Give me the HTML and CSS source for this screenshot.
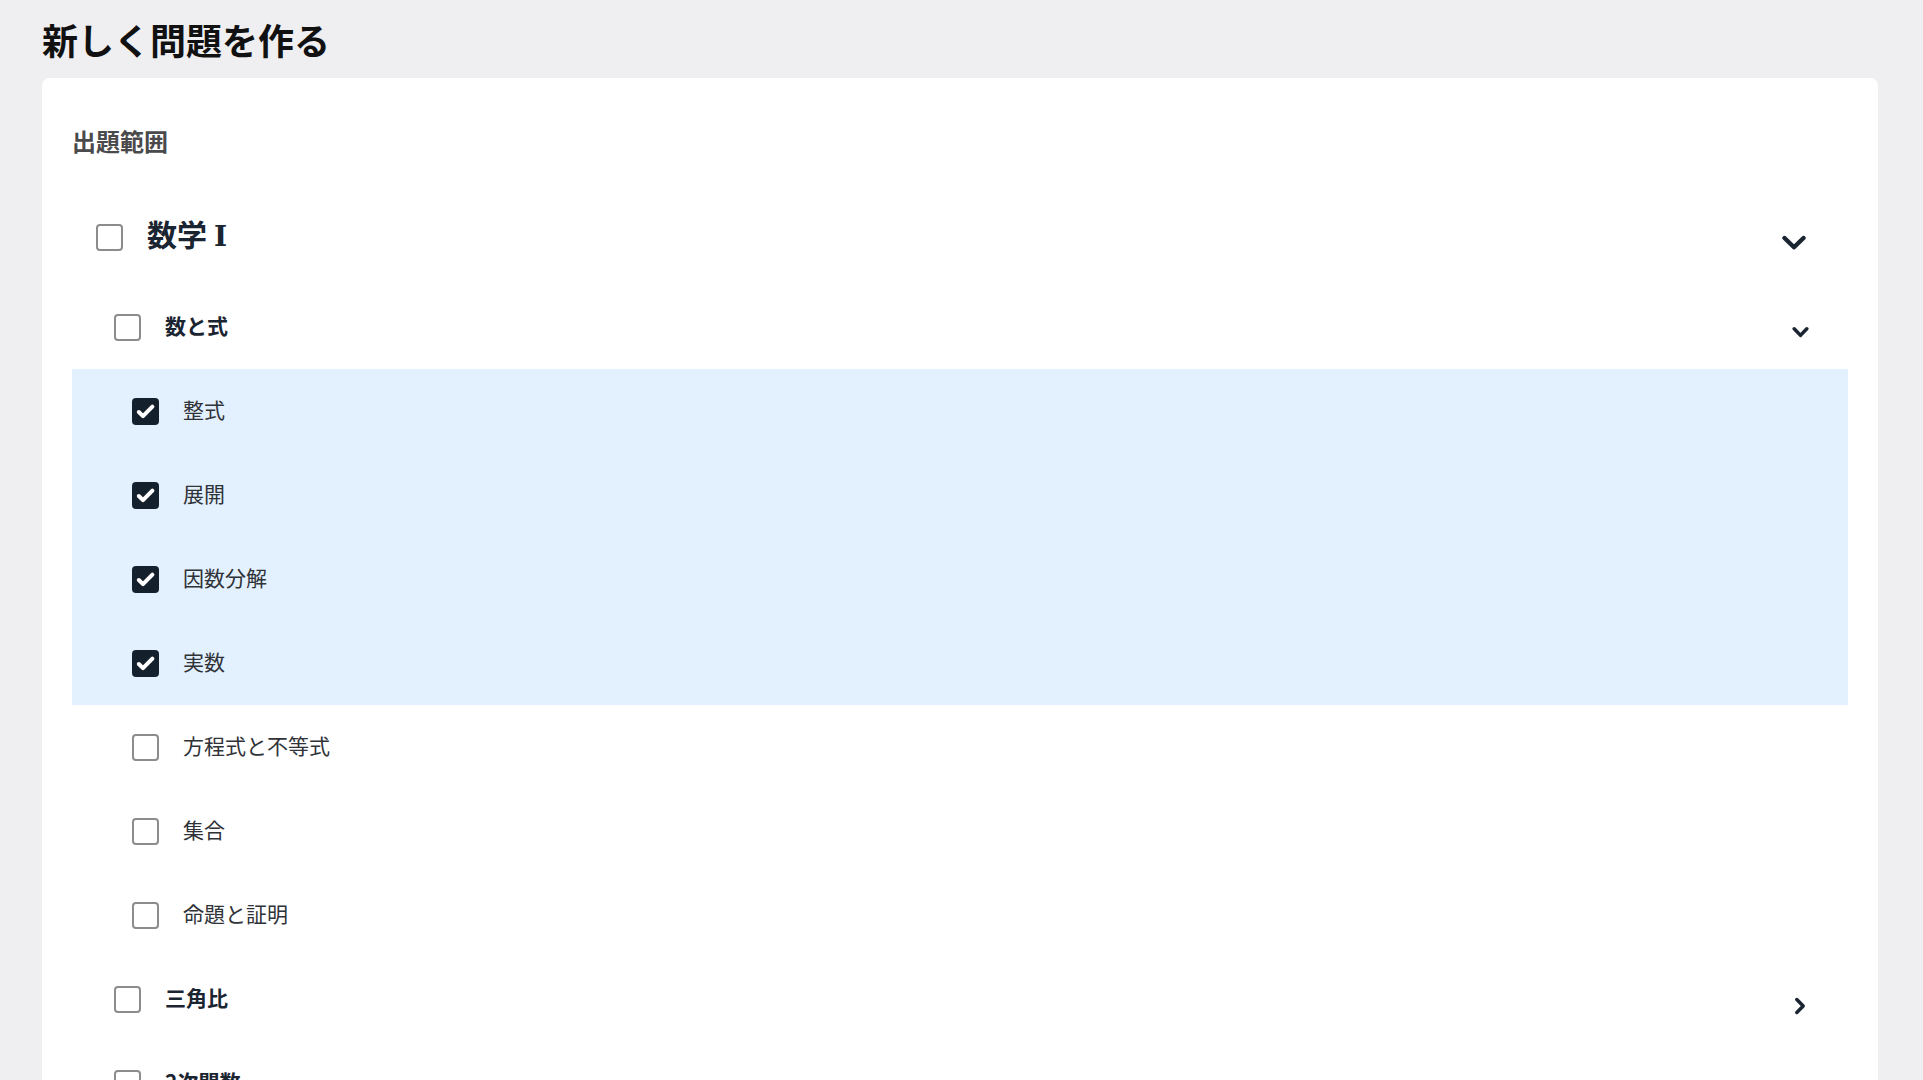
FILE: index.html
```html
<!DOCTYPE html>
<html lang="ja">
<head>
<meta charset="utf-8">
<title>新しく問題を作る</title>
<link rel="stylesheet" href="styles.css">
</head>
<body>
<main class="page">
  <h1 class="title">新しく問題を作る</h1>
  <section class="card">
    <h2 class="label">出題範囲</h2>

    <div class="subject">
      <div class="row row-subject">
        <span class="cb"></span>
        <span class="name name-subject">数学<span class="numeral">Ⅰ</span></span>
        <svg class="chev chev-big" width="24" height="16" viewBox="0 0 24 16"><polyline points="2.5,3 12,12.3 21.5,3" fill="none" stroke="currentColor" stroke-width="4.4" stroke-linecap="round" stroke-linejoin="round"/></svg>
      </div>

      <div class="unit">
        <div class="row row-unit">
          <span class="cb"></span>
          <span class="name name-unit">数と式</span>
          <svg class="chev chev-down" width="17" height="13" viewBox="0 0 17 13"><polyline points="2.2,2.8 8.5,9.4 14.8,2.8" fill="none" stroke="currentColor" stroke-width="3.5" stroke-linecap="round" stroke-linejoin="round"/></svg>
        </div>
        <ul class="topics">
          <li class="row row-topic is-checked"><span class="cb cb-checked"><svg width="27" height="27" viewBox="0 0 27 27"><polyline points="6.8,14 11,18.2 20.4,8.6" fill="none" stroke="#fff" stroke-width="4" stroke-linecap="round" stroke-linejoin="round"/></svg></span><span class="name">整式</span></li>
          <li class="row row-topic is-checked"><span class="cb cb-checked"><svg width="27" height="27" viewBox="0 0 27 27"><polyline points="6.8,14 11,18.2 20.4,8.6" fill="none" stroke="#fff" stroke-width="4" stroke-linecap="round" stroke-linejoin="round"/></svg></span><span class="name">展開</span></li>
          <li class="row row-topic is-checked"><span class="cb cb-checked"><svg width="27" height="27" viewBox="0 0 27 27"><polyline points="6.8,14 11,18.2 20.4,8.6" fill="none" stroke="#fff" stroke-width="4" stroke-linecap="round" stroke-linejoin="round"/></svg></span><span class="name">因数分解</span></li>
          <li class="row row-topic is-checked"><span class="cb cb-checked"><svg width="27" height="27" viewBox="0 0 27 27"><polyline points="6.8,14 11,18.2 20.4,8.6" fill="none" stroke="#fff" stroke-width="4" stroke-linecap="round" stroke-linejoin="round"/></svg></span><span class="name">実数</span></li>
          <li class="row row-topic"><span class="cb"></span><span class="name">方程式と不等式</span></li>
          <li class="row row-topic"><span class="cb"></span><span class="name">集合</span></li>
          <li class="row row-topic"><span class="cb"></span><span class="name">命題と証明</span></li>
        </ul>
      </div>

      <div class="unit">
        <div class="row row-unit">
          <span class="cb"></span>
          <span class="name name-unit">三角比</span>
          <svg class="chev chev-right" width="12" height="18" viewBox="0 0 12 18"><polyline points="2.8,2.6 9.2,9 2.8,15.4" fill="none" stroke="currentColor" stroke-width="3.5" stroke-linecap="round" stroke-linejoin="round"/></svg>
        </div>
      </div>

      <div class="unit">
        <div class="row row-unit">
          <span class="cb"></span>
          <span class="name name-unit">2次関数</span>
          <svg class="chev chev-right" width="12" height="18" viewBox="0 0 12 18"><polyline points="2.8,2.6 9.2,9 2.8,15.4" fill="none" stroke="currentColor" stroke-width="3.5" stroke-linecap="round" stroke-linejoin="round"/></svg>
        </div>
      </div>

      <div class="unit">
        <div class="row row-unit">
          <span class="cb"></span>
          <span class="name name-unit">データの分析</span>
          <svg class="chev chev-right" width="12" height="18" viewBox="0 0 12 18"><polyline points="2.8,2.6 9.2,9 2.8,15.4" fill="none" stroke="currentColor" stroke-width="3.5" stroke-linecap="round" stroke-linejoin="round"/></svg>
        </div>
      </div>
    </div>
  </section>
</main>
</body>
</html>
```

FILE: styles.css
```css
html, body {
  margin: 0;
  padding: 0;
  background: #efeff1;
}

body {
  font-family: "Noto Sans CJK JP", "Noto Sans", sans-serif;
  color: #1b2431;
}

.page {
  padding: 12px 45px 0 42px;
}

.title {
  margin: 0 0 12px;
  font-size: 36px;
  line-height: 54px;
  font-weight: 700;
  color: #111;
}

.card {
  background: #fff;
  border-radius: 8px 8px 0 0;
  padding: 45px 30px 40px;
}

.label {
  margin: 0 0 36px;
  font-size: 24px;
  line-height: 36px;
  font-weight: 700;
  color: #4a4a4c;
}

.topics {
  list-style: none;
  margin: 0;
  padding: 0;
}

.row {
  display: flex;
  align-items: center;
  height: 84px;
  box-sizing: border-box;
}

.row-subject {
  padding-left: 24px;
  margin-bottom: 6px;
}

.row-unit {
  padding-left: 42px;
}

.row-topic {
  padding-left: 60px;
}

.is-checked {
  background: #e3f0fd;
}

.cb {
  flex: none;
  width: 27px;
  height: 27px;
  box-sizing: border-box;
  border: 2px solid #8c8c8c;
  border-radius: 4px;
  background: #fff;
  margin-right: 24px;
}

.cb-checked {
  border: none;
  background: #15202d;
  display: block;
}

.cb-checked svg {
  display: block;
}

.name {
  font-size: 21px;
  line-height: 32px;
  color: #2f3237;
  margin-bottom: 4px;
}

.name-subject {
  font-size: 30px;
  line-height: 40px;
  font-weight: 700;
  color: #1b2431;
  margin-bottom: 5px;
}

.numeral {
  font-family: "DejaVu Serif", "Liberation Serif", serif;
  font-weight: 700;
  font-size: 28px;
  margin-left: 7px;
}

.name-unit {
  font-size: 21px;
  font-weight: 700;
  color: #1b2431;
}

.chev {
  flex: none;
  margin-left: auto;
  margin-top: 11px;
  color: #1b2532;
}

.chev-big {
  margin-right: 42px;
}

.chev-down {
  margin-right: 39px;
}

.chev-right {
  margin-right: 42px;
  margin-top: 13px;
}
```
